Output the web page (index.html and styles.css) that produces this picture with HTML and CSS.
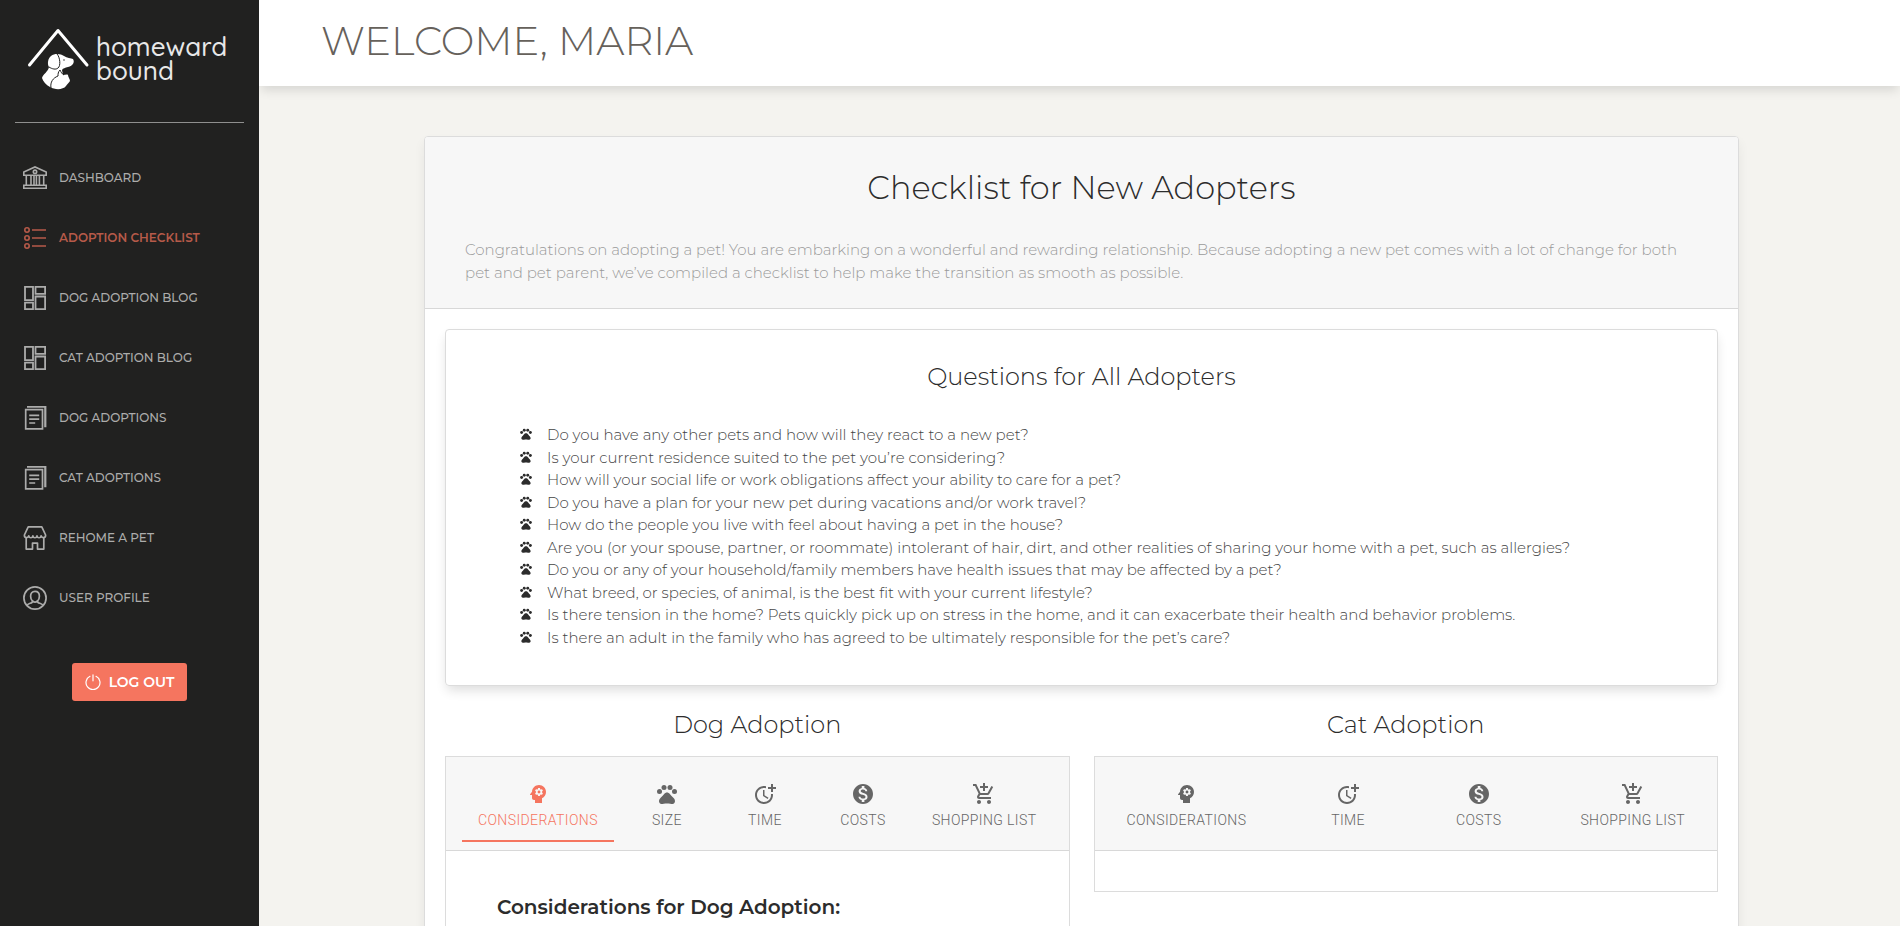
FILE: index.html
```html
<!DOCTYPE html>
<html lang="en">
<head>
<meta charset="utf-8">
<title>Homeward Bound – Adoption Checklist</title>
<link rel="stylesheet" href="styles.css">
</head>
<body>
<svg class="sprite" aria-hidden="true">
  <symbol id="i-head" viewBox="0 0 24 24"><path d="M13 8.57c-.79 0-1.43.64-1.43 1.43s.64 1.43 1.43 1.43 1.43-.64 1.43-1.43-.64-1.43-1.43-1.43z"/><path d="M13 3C9.25 3 6.2 5.94 6.02 9.64L4.1 12.2c-.25.33-.01.8.4.8H6v3c0 1.1.9 2 2 2h1v3h7v-4.68c2.36-1.12 4-3.53 4-6.32 0-3.87-3.13-7-7-7zm3 7c0 .13-.01.26-.02.39l.83.66c.08.06.1.16.05.25l-.8 1.39c-.05.09-.16.12-.24.09l-.99-.4c-.21.16-.43.29-.67.39L14 13.83c-.01.1-.1.17-.2.17h-1.6c-.1 0-.18-.07-.2-.17l-.15-1.06c-.25-.1-.47-.23-.68-.39l-.99.4c-.09.03-.2 0-.25-.09l-.8-1.39c-.05-.08-.03-.19.05-.25l.84-.66c-.01-.13-.02-.26-.02-.39s.02-.27.04-.39l-.85-.66c-.08-.06-.1-.16-.05-.26l.8-1.38c.05-.09.15-.12.24-.09l1 .4c.2-.15.43-.29.67-.39l.15-1.06c.02-.1.1-.17.2-.17h1.6c.1 0 .18.07.2.17l.15 1.06c.24.1.46.23.67.39l1-.4c.09-.03.2 0 .24.09l.8 1.38c.05.09.03.2-.05.26l-.85.66c.03.12.04.25.04.39z"/></symbol>
  <symbol id="i-paw" viewBox="0 0 24 24"><circle cx="4.5" cy="9.5" r="2.5"/><circle cx="9" cy="5.5" r="2.5"/><circle cx="15" cy="5.5" r="2.5"/><circle cx="19.5" cy="9.5" r="2.5"/><path d="M17.34 14.86c-.87-1.02-1.6-1.89-2.48-2.91-.46-.54-1.05-1.08-1.75-1.32-.11-.04-.22-.07-.33-.09-.25-.04-.52-.04-.78-.04s-.53 0-.79.05c-.11.02-.22.05-.33.09-.7.24-1.28.78-1.75 1.32-.87 1.02-1.6 1.89-2.48 2.91-1.31 1.31-2.92 2.76-2.62 4.79.29 1.02 1.02 2.03 2.33 2.32.73.15 3.06-.44 5.54-.44h.18c2.48 0 4.81.58 5.54.44 1.31-.29 2.04-1.31 2.33-2.32.31-2.04-1.3-3.49-2.61-4.8z"/></symbol>
  <symbol id="i-time" viewBox="0 0 24 24"><path d="M10 8v6l4.7 2.9.8-1.2-4-2.4V8z"/><path d="M17.92 12c.05.33.08.66.08 1 0 3.9-3.1 7-7 7s-7-3.1-7-7 3.1-7 7-7c.7 0 1.37.1 2 .29V4.23C12.36 4.08 11.69 4 11 4c-5 0-9 4-9 9s4 9 9 9 9-4 9-9c0-.34-.02-.67-.06-1h-2.02z"/><path d="M20 5V2h-2v3h-3v2h3v3h2V7h3V5z"/></symbol>
  <symbol id="i-cost" viewBox="0 0 24 24"><path d="M12 2C6.48 2 2 6.48 2 12s4.48 10 10 10 10-4.48 10-10S17.52 2 12 2zm1.41 16.09V20h-2.67v-1.93c-1.71-.36-3.16-1.46-3.27-3.4h1.96c.1 1.05.82 1.87 2.65 1.87 1.96 0 2.4-.98 2.4-1.59 0-.83-.44-1.61-2.67-2.14-2.48-.6-4.18-1.62-4.18-3.67 0-1.72 1.39-2.84 3.11-3.21V4h2.67v1.95c1.86.45 2.79 1.86 2.85 3.39H14.3c-.05-1.11-.64-1.87-2.22-1.87-1.5 0-2.4.68-2.4 1.64 0 .84.65 1.39 2.67 1.91s4.18 1.39 4.18 3.91c-.01 1.83-1.38 2.83-3.12 3.16z"/></symbol>
  <symbol id="i-cart" viewBox="0 0 24 24"><path d="M11 9h2V6h3V4h-3V1h-2v3H8v2h3v3zm-4 9c-1.1 0-1.99.9-1.99 2S5.9 22 7 22s2-.9 2-2-.9-2-2-2zm10 0c-1.1 0-1.99.9-1.99 2s.89 2 1.99 2 2-.9 2-2-.9-2-2-2zm-9.83-3.25l.03-.12.9-1.63h7.45c.75 0 1.41-.41 1.75-1.03l3.86-7.01L19.42 4h-.01l-1.1 2-2.76 5H8.53l-.13-.27L6.16 6l-.95-2-.94-2H1v2h2l3.6 7.59-1.35 2.45c-.16.28-.25.61-.25.96 0 1.1.9 2 2 2h12v-2H7.42c-.13 0-.25-.11-.25-.25z"/></symbol>
  <symbol id="i-bank" viewBox="0 0 24 24"><g fill="none" stroke="currentColor" stroke-width="1.600"><path d="M.8 9.300V5.900L12 .9l11.200 5v3.400z"/><circle cx="12" cy="5.800" r="1.700"/><path d="M3.300 9.300v9.700M8 9.300v9.700M11 9.300v9.700M13.400 9.300v9.700M16.400 9.300v9.700M20.700 9.300v9.700M.8 19.200h22.400v3.100H.8z"/></g></symbol>
  <symbol id="i-list" viewBox="0 0 24 24"><g fill="none" stroke="currentColor" stroke-width="1.600"><circle cx="4" cy="4" r="2.200"/><circle cx="4" cy="12" r="2.200"/><circle cx="4" cy="20" r="2.200"/><path d="M9 4h14M9 12h14M9 20h14"/></g></symbol>
  <symbol id="i-grid" viewBox="0 0 24 24"><path fill="none" stroke="currentColor" stroke-width="1.800" d="M2 .9h8v13.200H2zM12.500.9h9.600v7h-9.600zM2 16.600h8v6.500H2zM12.500 10.500h9.600v12.600h-9.600z"/></symbol>
  <symbol id="i-docs" viewBox="0 0 24 24"><g fill="none" stroke="currentColor" stroke-width="1.700"><path d="M2.700 3.700h16.800v19.200H2.700z"/><path d="M6.200 9.400h10M6.200 13.200h10M6.200 17h6"/></g><path d="M4 0h19.400v21.200h-2.200V1.800H4z"/></symbol>
  <symbol id="i-shop" viewBox="0 0 24 24"><g fill="none" stroke="currentColor" stroke-width="1.700" stroke-linejoin="round"><path d="M5.200.9h13.600L22.600 9c.3 3-3.700 3.600-4.500.8-.5 2.600-3.700 2.600-4.100 0-.5 2.600-3.700 2.600-4.100 0-.5 2.600-3.600 2.600-4.100 0-.8 2.800-4.700 2.200-4.400-.8z"/><path d="M3.200 11.700v11.400h6.300v-6h5v6h6.300V11.700"/></g></symbol>
  <symbol id="i-user" viewBox="0 0 24 24"><g fill="none" stroke="currentColor" stroke-width="1.700"><circle cx="12" cy="12" r="11.100"/><path d="M12 5.300c-3 0-4.400 2.200-4.400 4.900 0 1.800.6 3.500 1.800 4.600.3 1.700-.7 2.100-2.200 2.500-1.500.5-2.700 1-3.200 2.400M12 5.300c3 0 4.400 2.200 4.400 4.900 0 1.800-.6 3.500-1.800 4.600-.3 1.700.7 2.100 2.200 2.500 1.500.5 2.700 1 3.200 2.400"/><path d="M9.400 14.800c1.500 1.500 3.700 1.500 5.200 0"/></g></symbol>
  <symbol id="i-power" viewBox="0 0 16 16"><path fill="none" stroke="currentColor" stroke-width="1.200" stroke-linecap="round" d="M8 .8v6M5 2.300a7 7 0 1 0 6 0"/></symbol>
</svg>

<div class="app">
  <aside class="sidebar">
    <a class="brand" href="#">
      <svg class="brand-mark" viewBox="0 0 64 64" aria-hidden="true">
        <path class="roof" d="M3.500 38 32 3.500 61 38"/>
        <path class="pet" d="M25 29c4-3 10-2 13 0 3 2 7 2 9 3 2 3 0 7-5 8-3 1-5 1-6 3l1 5c2 0 4-1 5 0 0 2 2 4 2 6-1 2-3 3-4 5-3 4-11 4-16 1-4-2-7-6-8-9 1-4 6-6 7-11-2-3-1-9 2-11z"/>
        <path class="cut" d="M31 27c3 3 4 12 1 14-2 2-6 1-9-1M34 43c-2 2-2 4-2 6-5 2-8 6-7 12M34 43c1 2 2 4 4 5"/>
        <circle class="eye" cx="38" cy="33" r="1"/>
      </svg>
      <span class="brand-name"><span>homeward</span><span>bound</span></span>
    </a>
    <nav class="menu" aria-label="Main">
      <a class="menu-link" href="#"><svg class="icon"><use href="#i-bank"/></svg>Dashboard</a>
      <a class="menu-link active" href="#" aria-current="page"><svg class="icon"><use href="#i-list"/></svg>Adoption Checklist</a>
      <a class="menu-link" href="#"><svg class="icon"><use href="#i-grid"/></svg>Dog Adoption Blog</a>
      <a class="menu-link" href="#"><svg class="icon"><use href="#i-grid"/></svg>Cat Adoption Blog</a>
      <a class="menu-link" href="#"><svg class="icon"><use href="#i-docs"/></svg>Dog Adoptions</a>
      <a class="menu-link" href="#"><svg class="icon"><use href="#i-docs"/></svg>Cat Adoptions</a>
      <a class="menu-link" href="#"><svg class="icon"><use href="#i-shop"/></svg>Rehome a Pet</a>
      <a class="menu-link" href="#"><svg class="icon"><use href="#i-user"/></svg>User Profile</a>
    </nav>
    <button class="logout" type="button"><svg class="power"><use href="#i-power"/></svg>LOG OUT</button>
  </aside>

  <div class="main">
    <header class="topbar"><h1 class="welcome">WELCOME, MARIA</h1></header>
    <main class="content">
      <article class="card">
        <header class="card-head">
          <h2 class="card-title">Checklist for New Adopters</h2>
          <p class="intro">Congratulations on adopting a pet! You are embarking on a wonderful and rewarding relationship. Because adopting a new pet comes with a lot of change for both pet and pet parent, we’ve compiled a checklist to help make the transition as smooth as possible.</p>
        </header>
        <div class="card-body">
          <section class="questions">
            <h3 class="section-title">Questions for All Adopters</h3>
            <ul class="question-list">
              <li><svg class="bullet"><use href="#i-paw"/></svg>Do you have any other pets and how will they react to a new pet?</li>
              <li><svg class="bullet"><use href="#i-paw"/></svg>Is your current residence suited to the pet you’re considering?</li>
              <li><svg class="bullet"><use href="#i-paw"/></svg>How will your social life or work obligations affect your ability to care for a pet?</li>
              <li><svg class="bullet"><use href="#i-paw"/></svg>Do you have a plan for your new pet during vacations and/or work travel?</li>
              <li><svg class="bullet"><use href="#i-paw"/></svg>How do the people you live with feel about having a pet in the house?</li>
              <li><svg class="bullet"><use href="#i-paw"/></svg>Are you (or your spouse, partner, or roommate) intolerant of hair, dirt, and other realities of sharing your home with a pet, such as allergies?</li>
              <li><svg class="bullet"><use href="#i-paw"/></svg>Do you or any of your household/family members have health issues that may be affected by a pet?</li>
              <li><svg class="bullet"><use href="#i-paw"/></svg>What breed, or species, of animal, is the best fit with your current lifestyle?</li>
              <li><svg class="bullet"><use href="#i-paw"/></svg>Is there tension in the home? Pets quickly pick up on stress in the home, and it can exacerbate their health and behavior problems.</li>
              <li><svg class="bullet"><use href="#i-paw"/></svg>Is there an adult in the family who has agreed to be ultimately responsible for the pet’s care?</li>
            </ul>
          </section>
          <div class="species">
            <section class="species-col">
              <h3 class="section-title">Dog Adoption</h3>
              <div class="tab-card">
                <div class="tabs" role="tablist" aria-label="Dog adoption">
                  <button class="tab selected" type="button" role="tab" aria-selected="true"><svg class="icon"><use href="#i-head"/></svg>CONSIDERATIONS</button>
                  <button class="tab" type="button" role="tab"><svg class="icon"><use href="#i-paw"/></svg>SIZE</button>
                  <button class="tab" type="button" role="tab"><svg class="icon"><use href="#i-time"/></svg>TIME</button>
                  <button class="tab" type="button" role="tab"><svg class="icon"><use href="#i-cost"/></svg>COSTS</button>
                  <button class="tab" type="button" role="tab"><svg class="icon"><use href="#i-cart"/></svg>SHOPPING LIST</button>
                </div>
                <div class="panel open" role="tabpanel"><h4 class="panel-title">Considerations for Dog Adoption:</h4></div>
              </div>
            </section>
            <section class="species-col">
              <h3 class="section-title">Cat Adoption</h3>
              <div class="tab-card">
                <div class="tabs" role="tablist" aria-label="Cat adoption">
                  <button class="tab" type="button" role="tab"><svg class="icon"><use href="#i-head"/></svg>CONSIDERATIONS</button>
                  <button class="tab" type="button" role="tab"><svg class="icon"><use href="#i-time"/></svg>TIME</button>
                  <button class="tab" type="button" role="tab"><svg class="icon"><use href="#i-cost"/></svg>COSTS</button>
                  <button class="tab" type="button" role="tab"><svg class="icon"><use href="#i-cart"/></svg>SHOPPING LIST</button>
                </div>
                <div class="panel" role="tabpanel"></div>
              </div>
            </section>
          </div>
        </div>
      </article>
    </main>
  </div>
</div>
</body>
</html>
```
FILE: styles.css
```css
* { box-sizing: border-box; }

body {
  margin: 0;
  background: #f4f3ef;
  color: #2c2c2c;
  font-family: Montserrat, Inter, "Open Sans", sans-serif;
  font-weight: 300;
  font-size: 15px;
  line-height: 1.5;
}

h1, h2, h3, h4, p, ul { margin: 0; padding: 0; }
.sprite { display: none; }
.icon { width: 24px; height: 24px; flex: none; fill: currentColor; }

.app { display: flex; height: 100vh; overflow: hidden; }

/* Sidebar */
.sidebar {
  position: relative;
  z-index: 1;
  flex: none;
  width: 259px;
  background: #212120;
  display: flex;
  flex-direction: column;
  align-items: center;
}
.brand {
  align-self: stretch;
  display: flex;
  align-items: center;
  gap: 6px;
  margin: 0 15px;
  height: 123px;
  padding: 0 0 4px 11px;
  border-bottom: 1px solid #8f8f8e;
  color: #e8e8e8;
  text-decoration: none;
}
.brand-mark { width: 64px; height: 64px; flex: none; }
.roof { fill: none; stroke: #fff; stroke-width: 3; stroke-linecap: round; stroke-linejoin: round; }
.pet { fill: #fff; }
.cut { fill: none; stroke: #212120; stroke-width: 1; }
.eye { fill: #8f8f8e; }
.brand-name {
  display: grid;
  font-family: Quicksand, Comfortaa, Lato, sans-serif;
  font-size: 26px;
  font-weight: 500;
  line-height: 24px;
}

.menu {
  align-self: stretch;
  display: flex;
  flex-direction: column;
  gap: 20px;
  padding: 35px 23px 0;
}
.menu-link {
  display: flex;
  align-items: center;
  gap: 12px;
  height: 40px;
  color: #acacab;
  font-size: 12px;
  font-weight: 500;
  text-transform: uppercase;
  text-decoration: none;
}
.menu-link.active { color: #b65a49; font-weight: 600; }

.logout {
  display: flex;
  align-items: center;
  gap: 8px;
  height: 38px;
  margin-top: 45px;
  padding: 0 13px;
  border: 0;
  border-radius: 3px;
  background: #f5755f;
  color: #fff;
  font: inherit;
  font-size: 14px;
  font-weight: 600;
}
.power { width: 16px; height: 16px; }

/* Page */
.main { flex: 1; min-width: 0; }
.topbar {
  height: 86px;
  padding: 0 62px;
  display: flex;
  align-items: center;
  background: #fff;
  box-shadow: 0 6px 10px -2px rgba(0, 0, 0, .12);
}
.welcome { padding-bottom: 4px; color: #66615b; font-size: 40px; font-weight: 300; line-height: 48px; }
.content { padding: 50px 161px 50px 165px; }

.card {
  border: 1px solid #dcdcdc;
  border-radius: 4px;
  background: #fff;
  box-shadow: 0 6px 12px rgba(0, 0, 0, .06);
}
.card-head {
  padding: 30px 40px 24px;
  border-bottom: 1px solid #d8d8d8;
  border-radius: 3px 3px 0 0;
  background: #f7f7f7;
}
.card-title { text-align: center; font-size: 32px; font-weight: 300; line-height: 42px; }
.intro { padding-top: 29px; color: #9a9a9a; line-height: 23px; }
.card-body { padding: 20px; }

.section-title { text-align: center; font-size: 24px; font-weight: 300; line-height: 36px; }
.questions {
  padding: 29px 73px 36px;
  border: 1px solid #dcdcdc;
  border-radius: 4px;
  box-shadow: 0 6px 12px -2px rgba(0, 0, 0, .14);
}
.question-list { padding-top: 29px; list-style: none; color: #444; }
.question-list li { display: flex; gap: 14px; }
.bullet { flex: none; width: 14px; height: 14px; margin-top: 3px; fill: #2c2c2c; }

.species { display: grid; grid-template-columns: 1fr 1fr; gap: 24px; padding-top: 21px; align-items: start; }
.species-col { display: grid; gap: 13px; }
.tab-card { border: 1px solid #dcdcdc; background: #fff; }
.tabs {
  display: flex;
  justify-content: space-between;
  padding: 16px 16px 8px;
  border-bottom: 1px solid #d8d8d8;
  background: #f7f7f7;
}
.tab {
  display: flex;
  flex-direction: column;
  align-items: center;
  gap: 2px;
  min-width: 90px;
  height: 69px;
  padding: 9px 16px 0;
  border: 0;
  border-bottom: 2px solid transparent;
  background: none;
  color: #666;
  font-family: Roboto, sans-serif;
  font-size: 14px;
  font-weight: 300;
  line-height: 24px;
  letter-spacing: 0.4px;
  white-space: nowrap;
}
.tab.selected { border-bottom-color: #f5755f; color: #f5755f; }
.panel { min-height: 40px; }
.panel.open { padding: 41px 51px; min-height: 400px; }
.panel-title { font-size: 20px; font-weight: 600; line-height: 30px; }
```
